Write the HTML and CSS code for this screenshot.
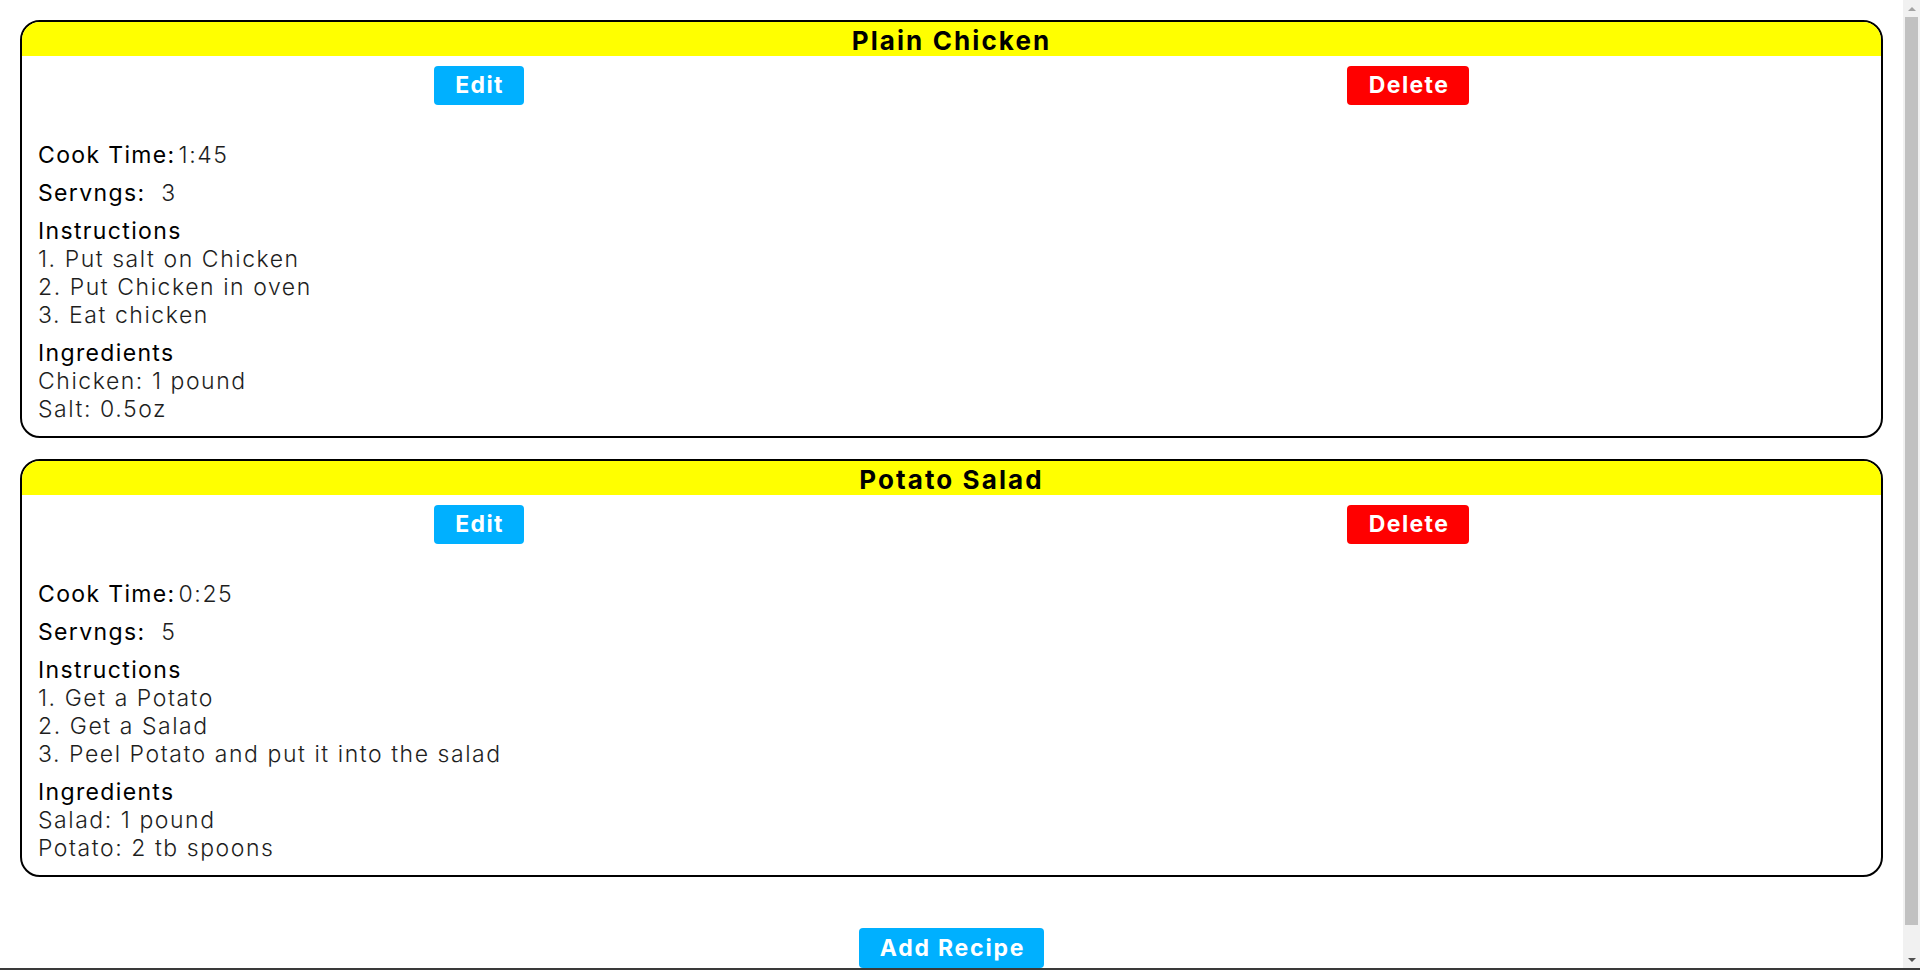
FILE: index.html
```html
<!DOCTYPE html>
<html lang="en">
<head>
<meta charset="utf-8">
<title>Recipes</title>
<link rel="stylesheet" href="styles.css">
</head>
<body>
<main class="page">
  <section class="card">
    <h2 class="card-title">Plain Chicken</h2>
    <div class="actions">
      <button class="btn btn-edit">Edit</button>
      <button class="btn btn-delete">Delete</button>
    </div>
    <div class="card-body">
      <div class="field"><span class="label">Cook Time:</span><span class="value inline">1:45</span></div>
      <div class="field"><span class="label">Servngs:&nbsp;</span><span class="value"> 3</span></div>
      <div class="field">
        <div class="label">Instructions</div>
        <div class="value">1. Put salt on Chicken</div>
        <div class="value">2. Put Chicken in oven</div>
        <div class="value">3. Eat chicken</div>
      </div>
      <div class="field">
        <div class="label">Ingredients</div>
        <div class="value">Chicken: 1 pound</div>
        <div class="value">Salt: 0.5oz</div>
      </div>
    </div>
  </section>

  <section class="card">
    <h2 class="card-title">Potato Salad</h2>
    <div class="actions">
      <button class="btn btn-edit">Edit</button>
      <button class="btn btn-delete">Delete</button>
    </div>
    <div class="card-body">
      <div class="field"><span class="label">Cook Time:</span><span class="value inline">0:25</span></div>
      <div class="field"><span class="label">Servngs:&nbsp;</span><span class="value"> 5</span></div>
      <div class="field">
        <div class="label">Instructions</div>
        <div class="value">1. Get a Potato</div>
        <div class="value">2. Get a Salad</div>
        <div class="value">3. Peel Potato and put it into the salad</div>
      </div>
      <div class="field">
        <div class="label">Ingredients</div>
        <div class="value">Salad: 1 pound</div>
        <div class="value">Potato: 2 tb spoons</div>
      </div>
    </div>
  </section>

  <div class="add-row">
    <button class="btn btn-add">Add Recipe</button>
  </div>
</main>

<div class="scrollbar" aria-hidden="true">
  <div class="sb-arrow sb-up"></div>
  <div class="sb-track"><div class="sb-thumb"></div></div>
  <div class="sb-arrow sb-down"></div>
</div>
<div class="window-edge" aria-hidden="true"></div>
</body>
</html>
```
FILE: styles.css
```css
html, body {
  margin: 0;
  padding: 0;
  background: #ffffff;
}

body {
  font-family: "Inter", "DejaVu Sans", sans-serif;
  color: #000;
}

.page {
  display: flex;
  flex-direction: column;
  gap: 21px;
  padding: 20px 37px 32px 20px;
}

.card {
  border: 2px solid #000;
  border-radius: 20px;
  overflow: hidden;
  background: #fff;
}

.card-title {
  margin: 0;
  height: 34px;
  line-height: 38px;
  background: #ffff00;
  text-align: center;
  font-size: 26px;
  font-weight: 700;
  letter-spacing: 2.1px;
  overflow: hidden;
}

.actions {
  display: flex;
  justify-content: space-around;
  margin-top: 10px;
}

.btn {
  font-family: "Inter", "DejaVu Sans", sans-serif;
  font-size: 23px;
  font-weight: 700;
  letter-spacing: 1.4px;
  color: #fff;
  border: none;
  border-radius: 4px;
  height: 39px;
  line-height: 39px;
  padding: 0 20px 0 21.5px;
  cursor: pointer;
}

.btn-edit {
  background: #00b0ff;
}

.btn-delete {
  background: #ff0000;
}

.btn-add {
  background: #00b0ff;
  height: 40px;
  padding: 0 19px 0 21px;
  letter-spacing: 1.8px;
}

.card-body {
  display: flex;
  flex-direction: column;
  gap: 10px;
  padding: 36px 16px 13px;
  font-size: 23px;
  line-height: 28px;
  letter-spacing: 1.35px;
}

.label {
  font-weight: 400;
  color: #000;
}

.value {
  font-weight: 300;
  color: #1e1e1e;
  letter-spacing: 1.55px;
}

.value.inline {
  margin-left: 3px;
}

.add-row {
  display: flex;
  justify-content: center;
  margin-top: 30px;
}

/* imitation of the classic browser scrollbar */
.scrollbar {
  position: fixed;
  top: 0;
  right: 0;
  width: 17px;
  height: 968px;
  background: #f1f1f1;
  display: flex;
  flex-direction: column;
  align-items: center;
}

.sb-arrow {
  width: 17px;
  height: 17px;
  display: flex;
  align-items: center;
  justify-content: center;
  flex: none;
}

.sb-up::before,
.sb-down::before {
  content: "";
  width: 0;
  height: 0;
  border-left: 4px solid transparent;
  border-right: 4px solid transparent;
}

.sb-up::before {
  border-bottom: 4px solid #a3a3a3;
}

.sb-down::before {
  border-top: 4px solid #505050;
}

.sb-track {
  flex: 1;
  width: 17px;
  display: flex;
  justify-content: center;
}

.sb-thumb {
  width: 13px;
  height: 908px;
  background: #c1c1c1;
}

/* dark edge of the window frame at the very bottom */
.window-edge {
  position: fixed;
  left: 0;
  right: 0;
  bottom: 0;
  height: 2px;
  background: #3a3a3a;
}
```
